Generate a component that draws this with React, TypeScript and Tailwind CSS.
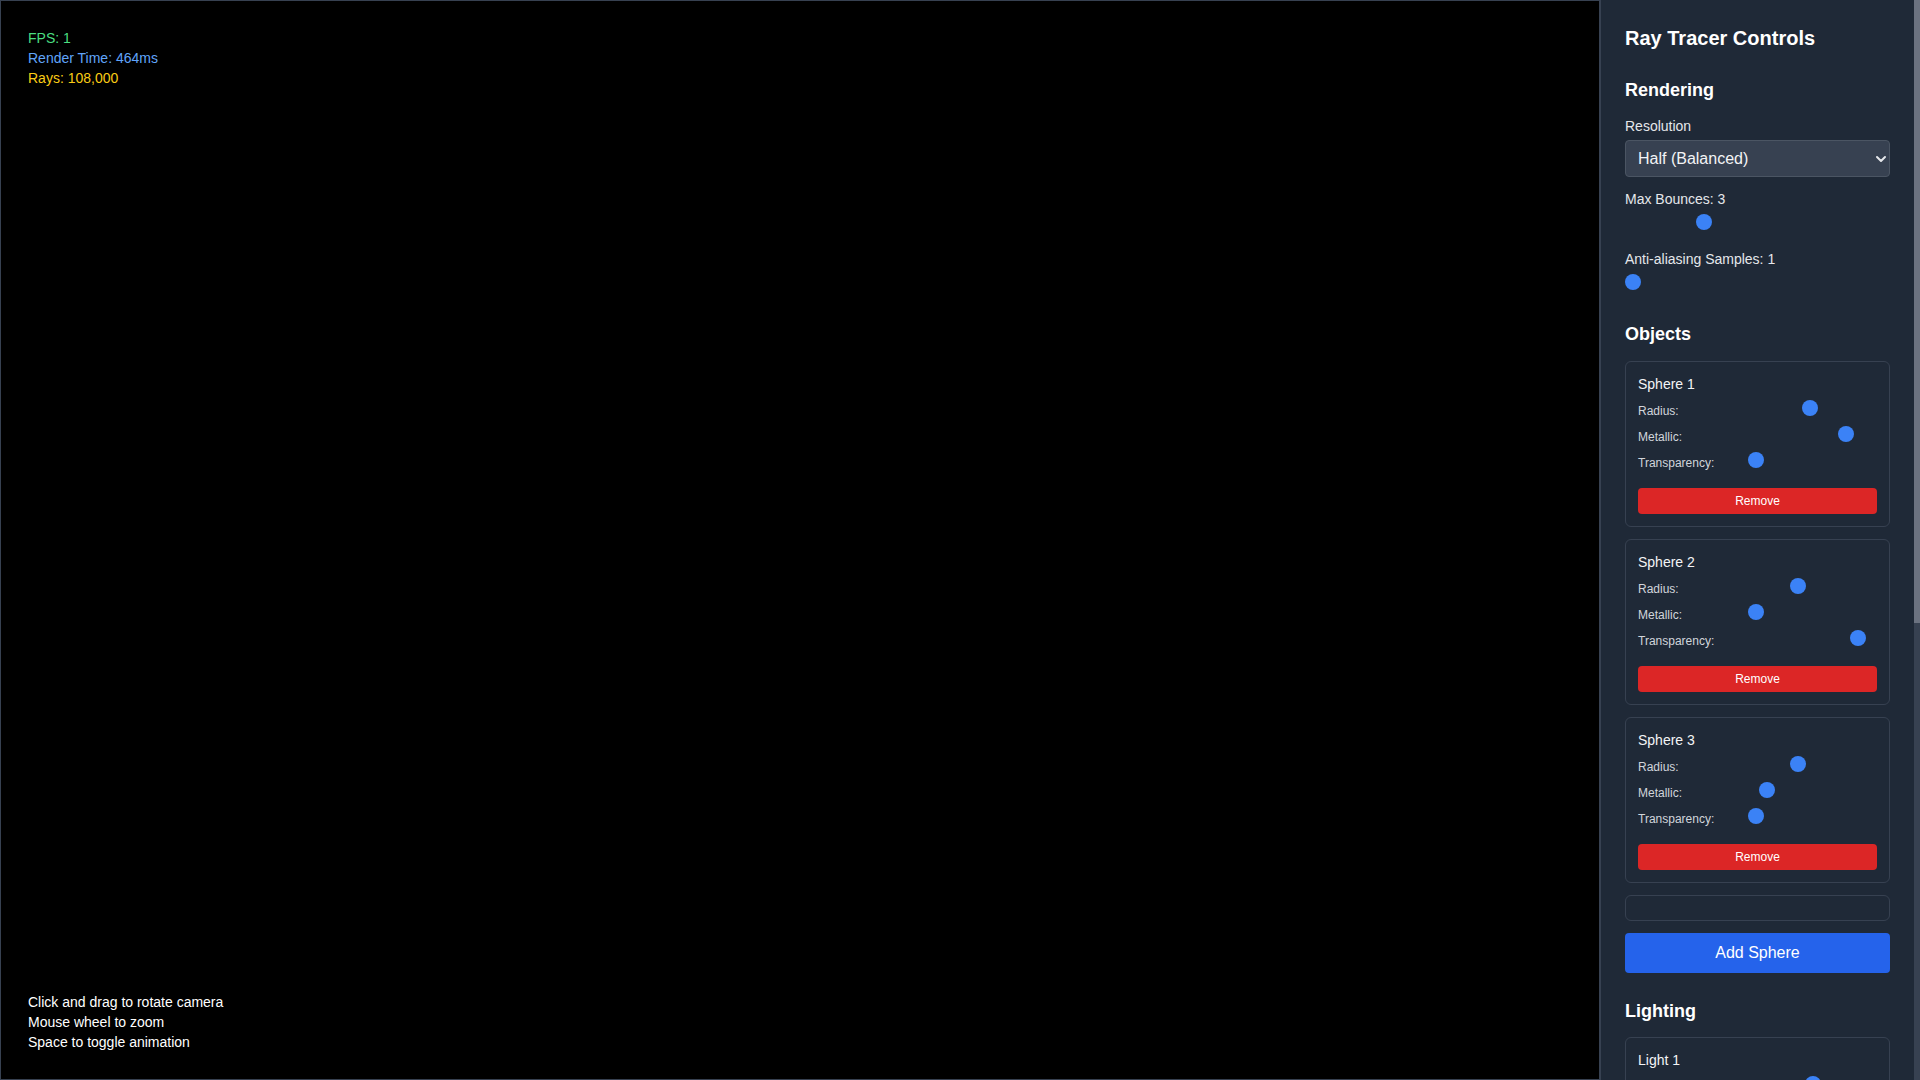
import React from 'react';
import { ChevronDown } from 'lucide-react';

const sliderClass =
  'block h-4 appearance-none bg-transparent cursor-pointer [&::-webkit-slider-runnable-track]:h-4 [&::-webkit-slider-runnable-track]:bg-transparent [&::-webkit-slider-thumb]:appearance-none [&::-webkit-slider-thumb]:h-4 [&::-webkit-slider-thumb]:w-4 [&::-webkit-slider-thumb]:rounded-full [&::-webkit-slider-thumb]:border-0 [&::-webkit-slider-thumb]:bg-[#3b82f6]';

interface Param {
  label: string;
  min: number;
  max: number;
  step: number;
  value: number;
}

const spheres: { name: string; params: Param[] }[] = [
  {
    name: 'Sphere 1',
    params: [
      { label: 'Radius:', min: 0.1, max: 2, step: 0.1, value: 1 },
      { label: 'Metallic:', min: 0, max: 1, step: 0.1, value: 0.8 },
      { label: 'Transparency:', min: 0, max: 1, step: 0.1, value: 0 },
    ],
  },
  {
    name: 'Sphere 2',
    params: [
      { label: 'Radius:', min: 0.1, max: 2, step: 0.1, value: 0.8 },
      { label: 'Metallic:', min: 0, max: 1, step: 0.1, value: 0 },
      { label: 'Transparency:', min: 0, max: 1, step: 0.1, value: 0.9 },
    ],
  },
  {
    name: 'Sphere 3',
    params: [
      { label: 'Radius:', min: 0.1, max: 2, step: 0.1, value: 0.8 },
      { label: 'Metallic:', min: 0, max: 1, step: 0.1, value: 0.1 },
      { label: 'Transparency:', min: 0, max: 1, step: 0.1, value: 0 },
    ],
  },
];

const lights: { name: string; params: Param[] }[] = [
  {
    name: 'Light 1',
    params: [
      { label: 'Intensity:', min: 0, max: 2, step: 0.1, value: 1 },
      { label: 'X:', min: -10, max: 10, step: 0.5, value: 5 },
      { label: 'Y:', min: -10, max: 10, step: 0.5, value: 5 },
      { label: 'Z:', min: -10, max: 10, step: 0.5, value: -5 },
    ],
  },
  {
    name: 'Light 2',
    params: [
      { label: 'Intensity:', min: 0, max: 2, step: 0.1, value: 0.5 },
      { label: 'X:', min: -10, max: 10, step: 0.5, value: -5 },
      { label: 'Y:', min: -10, max: 10, step: 0.5, value: 3 },
      { label: 'Z:', min: -10, max: 10, step: 0.5, value: 2 },
    ],
  },
];

const ParamRow: React.FC<Param> = ({ label, min, max, step, value }) => (
  <div className="flex h-[19px] items-start justify-between">
    <span className="mt-[3px] text-xs leading-4 text-[#d1d5db]">{label}</span>
    <input
      type="range"
      min={min}
      max={max}
      step={step}
      defaultValue={value}
      className={`${sliderClass} w-[129px]`}
    />
  </div>
);

const ItemCard: React.FC<{ name: string; params: Param[] }> = ({ name, params }) => (
  <div className="mb-3 rounded-md border border-[#374151] p-3">
    <div className="mb-1.5 text-sm leading-5 text-[#f3f4f6]">{name}</div>
    <div className="flex flex-col gap-[7px]">
      {params.map((p) => (
        <ParamRow key={p.label} {...p} />
      ))}
    </div>
    <button className="mt-[17px] h-[26px] w-full rounded bg-[#dc2626] text-xs text-white">Remove</button>
  </div>
);

const SliderGroup: React.FC<{ label: string; min: number; max: number; value: number }> = ({
  label,
  min,
  max,
  value,
}) => (
  <div className="mb-[19px]">
    <label className="mb-[5px] block text-sm leading-5 text-[#e5e7eb]">{label}</label>
    <input type="range" min={min} max={max} defaultValue={value} className={`${sliderClass} w-full`} />
  </div>
);

export default function App() {
  return (
    <div className="flex h-screen w-full overflow-hidden bg-black font-['Liberation_Sans',Arial,sans-serif]">
      {/* render viewport */}
      <div className="relative flex-1 border border-[#374151] bg-black">
        <div className="absolute left-[27px] top-[27px] text-sm leading-5">
          <div className="text-[#4ade80]">FPS: 1</div>
          <div className="text-[#60a5fa]">Render Time: 464ms</div>
          <div className="text-[#facc15]">Rays: 108,000</div>
        </div>
        <div className="absolute bottom-[27px] left-[27px] text-sm leading-5 text-white">
          <div>Click and drag to rotate camera</div>
          <div>Mouse wheel to zoom</div>
          <div>Space to toggle animation</div>
        </div>
      </div>

      {/* controls */}
      <div className="flex h-full w-80 shrink-0 border-l border-[#374151] bg-[#1f2937] text-white">
        <div className="min-w-0 flex-1 overflow-hidden p-6">
          <h1 className="mb-6 text-xl font-bold leading-7">Ray Tracer Controls</h1>

          <section className="mb-[30px]">
            <h2 className="mb-3 text-lg font-bold leading-7">Rendering</h2>
            <div className="mb-3">
              <label className="mb-1 block text-sm leading-5 text-[#e5e7eb]">Resolution</label>
              <div className="relative">
                <select
                  defaultValue="half"
                  className="block h-[37px] w-full appearance-none rounded border border-[#4b5563] bg-[#374151] px-3 text-base text-[#f3f4f6]"
                >
                  <option value="full">Full (Quality)</option>
                  <option value="half">Half (Balanced)</option>
                  <option value="quarter">Quarter (Fast)</option>
                </select>
                <ChevronDown
                  size={16}
                  strokeWidth={3}
                  className="pointer-events-none absolute right-[1px] top-[11px] text-[#e5e7eb]"
                />
              </div>
            </div>
            <SliderGroup label="Max Bounces: 3" min={1} max={8} value={3} />
            <SliderGroup label="Anti-aliasing Samples: 1" min={1} max={8} value={1} />
          </section>

          <section className="mb-6">
            <h2 className="mb-[13px] text-lg font-bold leading-7">Objects</h2>
            {spheres.map((s) => (
              <ItemCard key={s.name} {...s} />
            ))}
            <div className="mb-3 h-[26px] rounded-md border border-[#374151] p-3" />
            <button className="h-10 w-full rounded bg-[#2563eb] text-base text-white">Add Sphere</button>
          </section>

          <section className="mb-6">
            <h2 className="mb-3 text-lg font-bold leading-7">Lighting</h2>
            {lights.map((l) => (
              <ItemCard key={l.name} {...l} />
            ))}
            <button className="h-10 w-full rounded bg-[#2563eb] text-base text-white">Add Light</button>
          </section>

          <section>
            <h2 className="mb-3 text-lg font-bold leading-7">Camera</h2>
            <SliderGroup label="Field of View: 60" min={20} max={120} value={60} />
            <SliderGroup label="Distance: 10" min={2} max={30} value={10} />
            <SliderGroup label="Rotation Speed: 0.5" min={0} max={10} value={5} />
            <button className="h-10 w-full rounded bg-[#374151] text-base text-white">Reset Camera</button>
          </section>
        </div>

        {/* scrollbar */}
        <div className="h-full w-1.5 shrink-0 bg-[#374151]">
          <div className="h-[623px] w-full bg-[#6b7280]" />
        </div>
      </div>
    </div>
  );
}
